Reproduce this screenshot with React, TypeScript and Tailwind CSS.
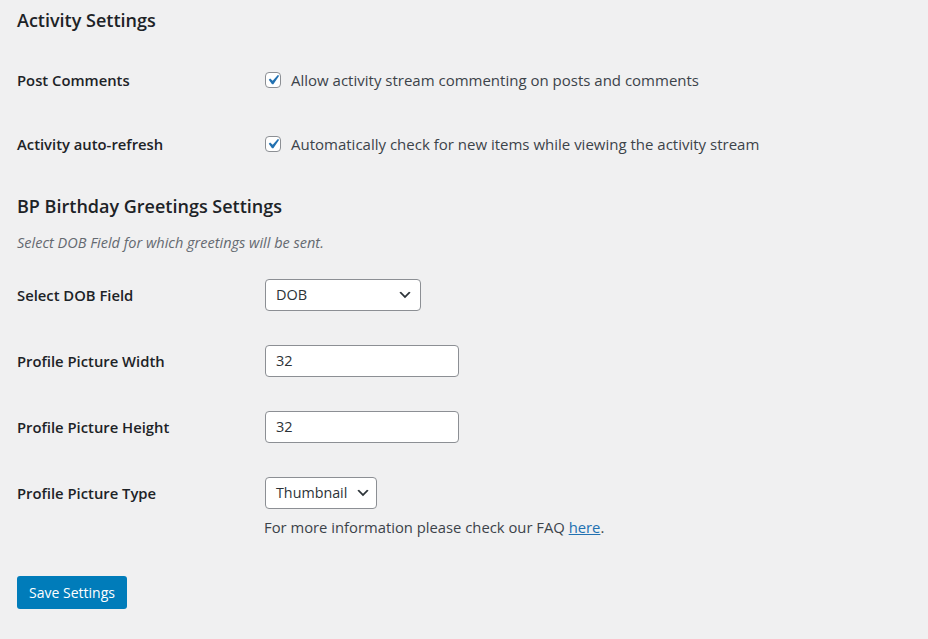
import React from "react";

const font = { fontFamily: '"Open Sans", "Noto Sans", sans-serif' };

const Check = () => (
  <span className="flex h-4 w-4 shrink-0 items-center justify-center rounded-[4px] border border-[#8c8f94] bg-white">
    <svg viewBox="0 0 20 20" className="-m-[3px] h-[22px] w-[22px]">
      <path d="M14.83 4.89l1.34.94-5.81 8.38H9.02L5.78 9.67l1.34-1.25 2.57 2.4z" fill="#2271b1" />
    </svg>
  </span>
);

const Chevron = () => (
  <svg viewBox="0 0 20 20" className="h-4 w-4">
    <path d="M5 6l5 5 5-5 2 1-7 7-7-7z" fill="#2c3338" />
  </svg>
);

const Row = ({ label, children }: { label: string; children: React.ReactNode }) => (
  <div className="flex h-[66px] items-center">
    <div className="w-[248px] text-[14.8px] font-semibold text-[#1d2327]">{label}</div>
    <div>{children}</div>
  </div>
);

export default function App() {
  return (
    <div className="min-h-[639px] w-full bg-[#f0f0f1] px-[17px] text-[15px] text-[#3c434a]" style={font}>
      <h2 className="flex h-10 items-center text-[18px] font-semibold text-[#1d2327]">Activity Settings</h2>

      <div className="mt-2">
        {[
          ["Post Comments", "Allow activity stream commenting on posts and comments"],
          ["Activity auto-refresh", "Automatically check for new items while viewing the activity stream"],
        ].map(([label, text]) => (
          <div key={label} className="flex h-16 items-center">
            <div className="w-[248px] text-[14.8px] font-semibold text-[#1d2327]">{label}</div>
            <label className="flex items-center gap-[10px]">
              <Check />
              <span>{text}</span>
            </label>
          </div>
        ))}
      </div>

      <h2 className="mt-[10px] flex h-10 items-center text-[18px] font-semibold text-[#1d2327]">
        BP Birthday Greetings Settings
      </h2>
      <p className="mt-[6px] h-[22px] text-[14.5px] italic leading-[22px] text-[#646970]">
        Select DOB Field for which greetings will be sent.
      </p>

      <div className="mt-2">
        <Row label="Select DOB Field">
          <div className="flex h-8 w-[156px] items-center justify-between rounded-[4px] border border-[#8c8f94] bg-white pl-[10px] pr-[7px] text-[14.5px] text-[#2c3338]">
            <span>DOB</span>
            <Chevron />
          </div>
        </Row>
        <Row label="Profile Picture Width">
          <div className="flex h-8 w-[194px] items-center rounded-[4px] border border-[#8c8f94] bg-white pl-[10px] text-[14.5px] text-[#2c3338]">32</div>
        </Row>
        <Row label="Profile Picture Height">
          <div className="flex h-8 w-[194px] items-center rounded-[4px] border border-[#8c8f94] bg-white pl-[10px] text-[14.5px] text-[#2c3338]">32</div>
        </Row>
        <div className="flex pt-[17px]">
          <div className="flex h-8 w-[248px] items-center text-[14.8px] font-semibold text-[#1d2327]">Profile Picture Type</div>
          <div>
            <div className="flex h-8 w-[112px] items-center justify-between rounded-[4px] border border-[#8c8f94] bg-white pl-[10px] pr-[5px] text-[14.3px] text-[#2c3338]">
              <span>Thumbnail</span>
              <Chevron />
            </div>
            <p className="-ml-px mt-[7px] text-[14.8px] leading-[22px]">
              For more information please check our FAQ{" "}
              <a href="#" className="text-[#2271b1] underline">here</a>.
            </p>
          </div>
        </div>
      </div>

      <button className="mt-[38px] h-[33px] w-[110px] rounded-[3px] bg-[#007cba] text-[14px] text-white">
        Save Settings
      </button>
    </div>
  );
}
